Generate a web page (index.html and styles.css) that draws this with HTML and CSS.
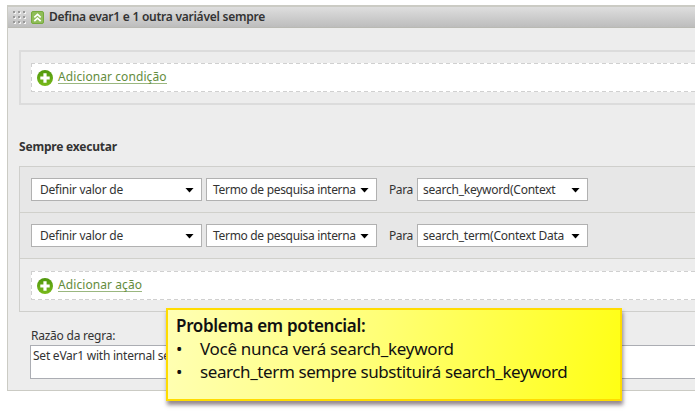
FILE: index.html
```html
<!DOCTYPE html>
<html lang="pt">
<head>
<meta charset="utf-8">
<title>Regras</title>
<link rel="stylesheet" href="styles.css">
</head>
<body>
<svg width="0" height="0" class="defs"><defs>
<linearGradient id="g" x1="0" y1="0" x2="0" y2="1"><stop offset="0" stop-color="#4f970d"/><stop offset="1" stop-color="#79ba1b"/></linearGradient>
<symbol id="plus" viewBox="0 0 16 16"><circle cx="8" cy="8" r="8" fill="url(#g)"/><path d="M8 3.3v9.4M3.3 8h9.4" stroke="#fff" stroke-width="3.2"/></symbol>
</defs></svg>
<main class="panel">
  <header class="head">
    <svg class="grip" width="13" height="13" viewBox="0 0 13 13"><path fill="#f4f4f4" d="M1 1h2v2H1zM6 1h2v2H6zM11 1h2v2h-2zM1 6h2v2H1zM6 6h2v2H6zM11 6h2v2h-2zM1 11h2v2H1zM6 11h2v2H6zM11 11h2v2h-2z"/><path fill="#999" d="M0 0h2v2H0zM5 0h2v2H5zM10 0h2v2h-2zM0 5h2v2H0zM5 5h2v2H5zM10 5h2v2h-2zM0 10h2v2H0zM5 10h2v2H5zM10 10h2v2h-2z"/></svg>
    <svg class="fold" width="13" height="13" viewBox="0 0 13 13"><rect x=".5" y=".5" width="12" height="12" rx="1.500" fill="#8fbd58" stroke="#76aa3c"/><path d="M3.300 6.300L6.500 3.300l3.200 3M3.300 10.200l3.200-3 3.200 3" fill="none" stroke="#fff" stroke-width="1.700"/></svg>
    <h1 class="title">Defina evar1 e 1 outra variável sempre</h1>
  </header>
  <section class="box conditions">
    <div class="add"><svg class="plus"><use href="#plus"/></svg><a class="cond">Adicionar condição</a></div>
  </section>
  <h2 class="subtitle">Sempre executar</h2>
  <section class="box actions">
    <div class="row">
      <div class="select"><span class="def">Definir valor de</span><i></i></div>
      <div class="select mid"><span class="term">Termo de pesquisa interna</span><i></i></div>
      <span class="to">Para</span>
      <div class="select last"><span class="kw">search_keyword(Context</span><i></i></div>
    </div>
    <div class="row">
      <div class="select"><span class="def">Definir valor de</span><i></i></div>
      <div class="select mid"><span class="term">Termo de pesquisa interna</span><i></i></div>
      <span class="to">Para</span>
      <div class="select last"><span class="kw">search_term(Context Data</span><i></i></div>
    </div>
    <div class="add"><svg class="plus"><use href="#plus"/></svg><a class="act">Adicionar ação</a></div>
  </section>
  <div class="label">Razão da regra:</div>
  <div class="reason">Set eVar1 with internal se</div>
</main>
<aside class="note">
  <h3>Problema em potencial:</h3>
  <ul>
    <li><b>•</b><span class="n1">Você nunca verá search_keyword</span></li>
    <li><b>•</b><span class="n2">search_term sempre substituirá search_keyword</span></li>
  </ul>
</aside>
</body>
</html>
```
FILE: styles.css
```css
* { box-sizing: border-box; }
body {
  margin: 0;
  width: 695px;
  height: 412px;
  overflow: hidden;
  background: #fff;
  color: #333;
  font: 12px/16px "Noto Sans", "Open Sans", sans-serif;
  letter-spacing: -.24px;
  white-space: nowrap;
}
h1, h2, h3, ul { margin: 0; padding: 0; font-size: inherit; list-style: none; }
.defs { position: absolute; }
.panel {
  margin: 5px 0 0 7px;
  height: 386px;
  border: solid #cbcbc4;
  border-width: 2px 0 1px 1px;
  background: #ededed;
}
.head {
  display: flex;
  align-items: center;
  height: 21px;
  padding-left: 5px;
  border-bottom: 1px solid #b9b9b3;
  background: linear-gradient(#dedede, #bdbdbd);
}
.fold { margin: 0 5px; }
.title { font-weight: 600; letter-spacing: -.25px; }
.box { margin-left: 11px; border: 2px solid #dcdcdc; border-right: 0; }
.conditions { margin-top: 22px; height: 55px; padding: 11px 0 0 10px; }
.add {
  display: flex;
  align-items: center;
  height: 29px;
  padding-left: 6px;
  background:
    repeating-linear-gradient(90deg, #d0d0d0 0 4px, #fff 4px 6.800px) 0 0 / 100% 1px no-repeat,
    repeating-linear-gradient(90deg, #d0d0d0 0 4px, #fff 4px 6.800px) 0 100% / 100% 1px no-repeat,
    repeating-linear-gradient(#d0d0d0 0 4px, #fff 4px 6.800px) 0 0 / 1px 100% no-repeat,
    #fff;
}
.plus { width: 16px; height: 16px; margin-right: 5px; }
.add a { color: #648c3c; border-bottom: 1px solid #9ab77f; line-height: 13px; margin-bottom: 2px; letter-spacing: .08px; }
.subtitle { margin: 34px 0 0 11px; font-weight: 700; letter-spacing: -.2px; }
.actions { margin-top: 11px; height: 146px; border-width: 1px 0 1px 1px; border-color: #cfcfcc; }
.row {
  display: flex;
  align-items: center;
  height: 46px;
  padding-left: 11px;
  border-bottom: 1px solid #d0d0cb;
  background: #e7e7e7;
}
.select {
  display: flex;
  align-items: center;
  justify-content: space-between;
  width: 171px;
  height: 23px;
  padding: 0 7px 0 8px;
  border: 1px solid #b1b1b1;
  background: #fff;
}
.select i {
  flex: none;
  width: 9px;
  height: 5px;
  margin-top: 1px;
  background: #000;
  clip-path: polygon(0 0, 100% 0, 50% 100%);
}
.mid { margin-left: 4px; padding-left: 6px; }
.last { padding-left: 5px; }
.term { letter-spacing: -.31px; }
.to { width: 40px; padding-left: 12px; letter-spacing: -.4px; }
.actions .add { margin: 12px 0 0 11px; }
.label { margin: 16px 0 0 23px; }
.reason { height: 34px; margin: 1px 0 0 22px; padding: 2px; border: 1px solid #abadb3; border-right: 0; background: #fff; }
.note {
  position: absolute;
  left: 166px;
  top: 308px;
  width: 456px;
  height: 93px;
  padding: 4px 8px;
  border: 2px solid #ffdc00;
  background: linear-gradient(100deg, #ffffb4, #ffff78 45%, #ffff14);
  box-shadow: 1px 4px 4px rgba(60, 40, 50, .55);
  color: #111;
  font-size: 17px;
  line-height: 23px;
}
.note h3 { font-weight: 600; letter-spacing: -.32px; }
.note li { display: flex; }
.note b { width: 24px; font-weight: 400; }
.n1 { letter-spacing: -.3px; }
.n2 { letter-spacing: -.4px; }
```
